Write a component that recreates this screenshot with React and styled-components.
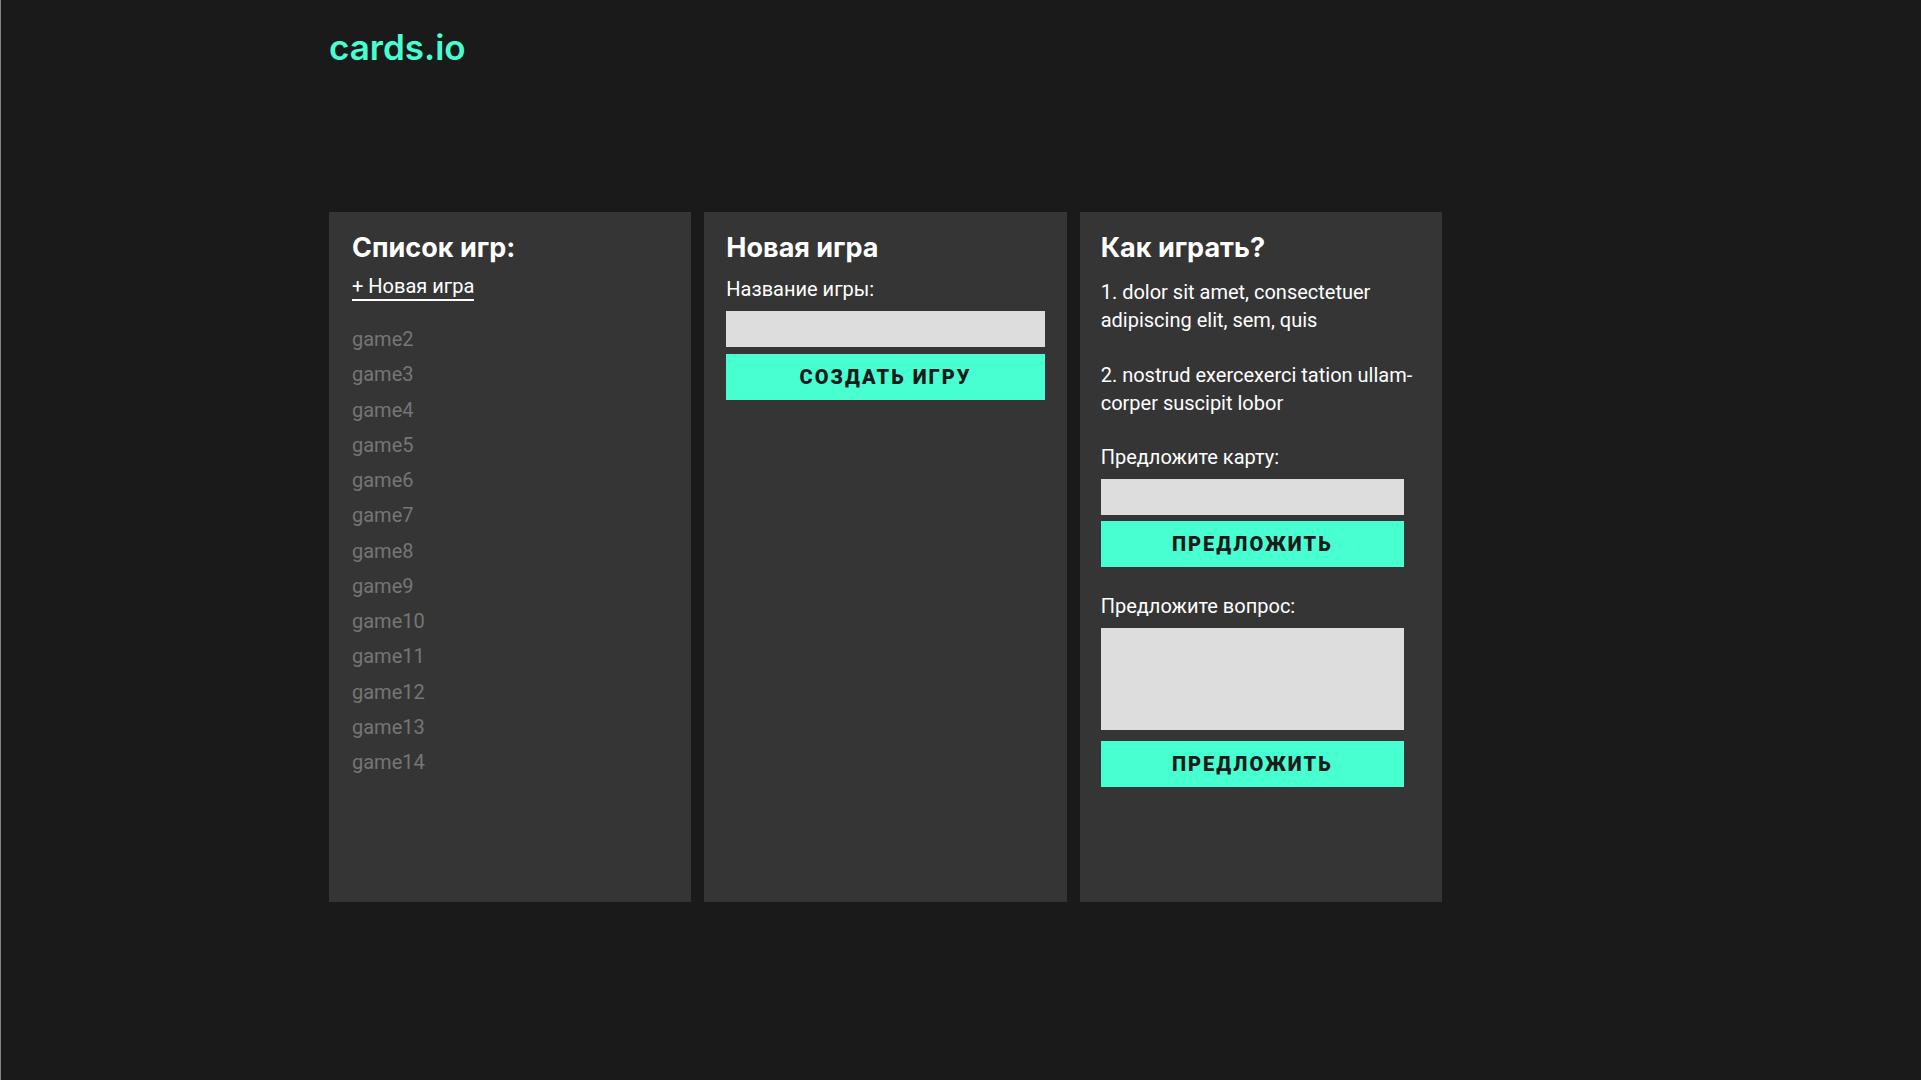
import React from "react";
import styled, { createGlobalStyle } from "styled-components";

const GlobalStyle = createGlobalStyle`
  *, *::before, *::after { box-sizing: border-box; }
  body {
    margin: 0;
    background: #1a1a1a;
    color: #ffffff;
    font-family: Roboto, "Liberation Sans", sans-serif;
    font-size: 20px;
    line-height: 27px;
  }
`;

const Page = styled.div`
  min-height: 100vh;
  border-left: 1px solid #868686;
  display: grid;
  grid-template-columns: minmax(16px, 328fr) minmax(0, 1113fr) minmax(16px, 479fr);
  align-content: start;
`;

const Header = styled.header`
  grid-column: 2;
  padding-top: 25px;
  height: 212px;
`;

const Logo = styled.a`
  color: #48ffd1;
  font-family: Inter, Roboto, sans-serif;
  font-size: 35px;
  line-height: 44px;
  font-weight: 600;
  text-decoration: none;
`;

const Panels = styled.main`
  grid-column: 2;
  display: grid;
  grid-template-columns: repeat(auto-fit, minmax(280px, 1fr));
  gap: 13px;
`;

const Panel = styled.section`
  min-height: 690px;
  padding: 18px ${(p) => p.$right || 22}px 22px ${(p) => p.$left || 22}px;
  background: #353535;
`;

const Title = styled.h2`
  margin: 0;
  font-family: Inter, Roboto, sans-serif;
  font-size: 27px;
  line-height: 36px;
  font-weight: 700;
`;

const NewGameLink = styled.a`
  display: inline-block;
  margin-top: 7px;
  border-bottom: 2px solid #ffffff;
  color: #ffffff;
  line-height: 26px;
  text-decoration: none;
`;

const GameList = styled.ul`
  display: flex;
  flex-direction: column;
  justify-content: space-between;
  min-height: 450px;
  margin: 25px 0 0;
  padding: 0;
  list-style: none;
`;

const GameLink = styled.a`
  color: #757575;
  text-decoration: none;
`;

const Rules = styled.div`
  display: grid;
  gap: 27px;
  margin-top: 12px;
`;

const Rule = styled.p`
  margin: 0;
  line-height: 28px;
`;

const Form = styled.form`
  display: flex;
  flex-direction: column;
  margin-top: ${(p) => p.$top}px;
  margin-right: ${(p) => p.$right || 0}px;
`;

const Label = styled.label`
  margin-bottom: 8px;
`;

const Input = styled.input`
  height: 36px;
  padding: 0 10px;
  border: 0;
  border-radius: 0;
  background: #dddddd;
  font: inherit;
`;

const TextArea = styled.textarea`
  height: 102px;
  padding: 8px 10px;
  border: 0;
  border-radius: 0;
  background: #dddddd;
  font: inherit;
  resize: none;
`;

const Button = styled.button`
  height: 46px;
  margin-top: ${(p) => p.$top}px;
  padding: 0;
  border: 0;
  background: #48ffd1;
  color: #1a1a1a;
  font: inherit;
  font-weight: 900;
  letter-spacing: 2px;
  text-transform: uppercase;
  cursor: pointer;
`;

const games = Array.from({ length: 13 }, (_, i) => `game${i + 2}`);

export default function App() {
  return (
    <Page>
      <GlobalStyle />
      <Header>
        <Logo href="#">cards.io</Logo>
      </Header>
      <Panels>
        <Panel $left={23}>
          <Title>Список игр:</Title>
          <NewGameLink href="#new">+ Новая игра</NewGameLink>
          <GameList>
            {games.map((name) => (
              <li key={name}>
                <GameLink href={`#${name}`}>{name}</GameLink>
              </li>
            ))}
          </GameList>
        </Panel>

        <Panel>
          <Title>Новая игра</Title>
          <Form $top={10} id="new">
            <Label htmlFor="game-name">Название игры:</Label>
            <Input id="game-name" type="text" />
            <Button type="button" $top={7}>Создать игру</Button>
          </Form>
        </Panel>

        <Panel $left={21} $right={16}>
          <Title>Как играть?</Title>
          <Rules>
            <Rule>1. dolor sit amet, consectetuer adipiscing elit, sem, quis</Rule>
            <Rule>2. nostrud exercexerci tation ullam-corper suscipit lobor</Rule>
          </Rules>
          <Form $top={27} $right={22}>
            <Label htmlFor="card">Предложите карту:</Label>
            <Input id="card" type="text" />
            <Button type="button" $top={6}>Предложить</Button>
          </Form>
          <Form $top={26} $right={22}>
            <Label htmlFor="question">Предложите вопрос:</Label>
            <TextArea id="question" />
            <Button type="button" $top={11}>Предложить</Button>
          </Form>
        </Panel>
      </Panels>
    </Page>
  );
}
